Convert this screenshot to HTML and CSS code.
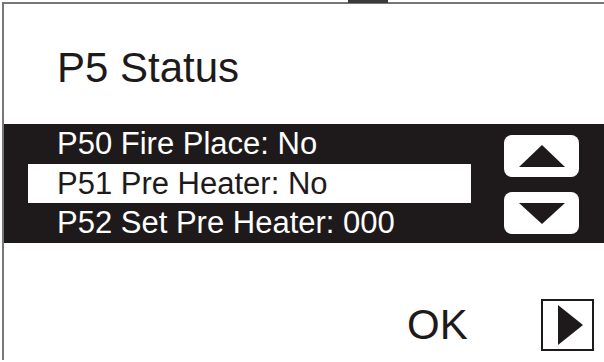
FILE: index.html
```html
<!DOCTYPE html>
<html>
<head>
<meta charset="utf-8">
<link rel="stylesheet" href="styles.css">
</head>
<body>
<div class="notch"></div>
<div class="screen">
  <div class="title">P5 Status</div>
  <div class="band">
    <div class="rows">
      <div class="row">P50 Fire Place: No</div>
      <div class="row sel">P51 Pre Heater: No</div>
      <div class="row">P52 Set Pre Heater: 000</div>
    </div>
    <div class="btns">
      <div class="btn"><svg width="46" height="22" viewBox="0 0 46 22"><polygon points="23,0 46,22 0,22" fill="#1e1a1b"/></svg></div>
      <div class="btn"><svg width="46" height="21" viewBox="0 0 46 21"><polygon points="0,0 46,0 23,21" fill="#1e1a1b"/></svg></div>
    </div>
  </div>
  <div class="footer">
    <span class="ok">OK</span>
    <div class="next"><svg width="25" height="40" viewBox="0 0 25 40"><polygon points="0,0 25,20 0,40" fill="#1e1a1b"/></svg></div>
  </div>
</div>
</body>
</html>
```
FILE: styles.css
```css
html, body {
  margin: 0;
  padding: 0;
  background: #fff;
  width: 604px;
  height: 362px;
  overflow: hidden;
  font-family: "Liberation Sans", Arial, sans-serif;
  color: #1e1a1b;
}
.notch {
  position: absolute;
  left: 348px;
  top: 0;
  width: 40px;
  height: 3px;
  background: #3a3a3a;
}
.screen {
  margin-top: 2px;
  margin-left: 2px;
  border-top: 2px solid #777;
  border-left: 2px solid #777;
  height: 358px;
  box-sizing: border-box;
  display: flex;
  flex-direction: column;
}
.title {
  font-size: 42px;
  line-height: 48px;
  padding: 40px 0 0 53px;
  height: 80px;
}
.band {
  background: #1e1a1b;
  height: 119px;
  display: flex;
  align-items: flex-start;
}
.rows {
  width: 467px;
  display: flex;
  flex-direction: column;
}
.row {
  font-size: 31px;
  line-height: 39.7px;
  height: 39.7px;
  color: #fff;
  padding-left: 53px;
}
.row.sel {
  background: #fff;
  color: #1e1a1b;
  margin-left: 24px;
  padding-left: 29px;
}
.btns {
  margin-left: 33px;
  padding-top: 11px;
  display: flex;
  flex-direction: column;
  gap: 15px;
}
.btn {
  width: 75px;
  height: 42px;
  background: #fff;
  border-radius: 8px;
  display: flex;
  align-items: center;
  justify-content: center;
}
.footer {
  display: flex;
  align-items: center;
  padding-top: 56px;
  padding-left: 403px;
}
.ok {
  font-size: 42px;
  line-height: 48px;
}
.next {
  margin-left: 73px;
  width: 53px;
  height: 52px;
  border: 2px solid #1e1a1b;
  display: flex;
  align-items: center;
  justify-content: center;
  padding-left: 6px;
  box-sizing: border-box;
}
```
